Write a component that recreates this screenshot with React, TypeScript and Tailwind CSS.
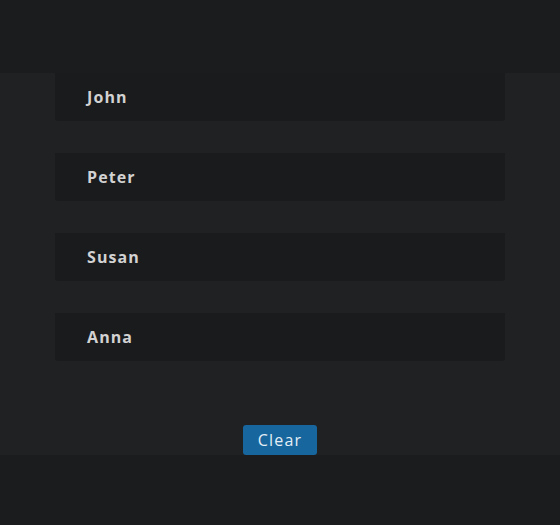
import React from 'react';

const names = ['John', 'Peter', 'Susan', 'Anna'];

export default function App() {
  return (
    <div
      className="min-h-[525px] w-full bg-[#1b1c1e] pt-[73px]"
      style={{ fontFamily: '"Open Sans", "DejaVu Sans", sans-serif' }}
    >
      <div className="flex flex-col items-center bg-[#202123]">
        <ul className="flex w-[450px] flex-col gap-8">
          {names.map((name) => (
            <li
              key={name}
              className="flex h-12 items-center rounded-b-[3px] bg-[#1a1b1d] pl-8 text-[16px] font-bold tracking-[1.1px] text-[#d2d2d2]"
            >
              {name}
            </li>
          ))}
        </ul>
        <button className="mt-16 h-[30px] w-[74px] rounded-[3px] bg-[#17669e] text-[16px] tracking-[1.2px] text-[#e4eef6]">
          Clear
        </button>
      </div>
    </div>
  );
}
